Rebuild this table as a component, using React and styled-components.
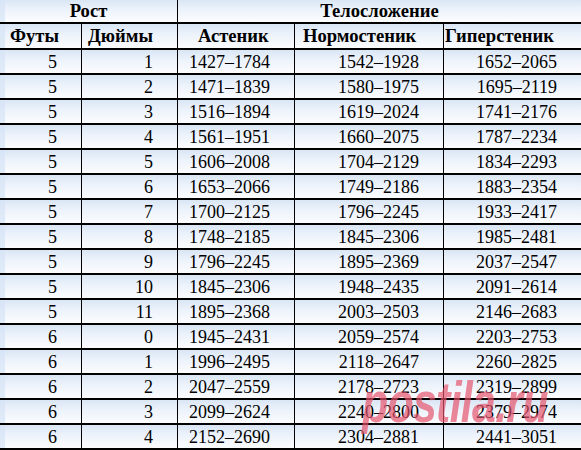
import React from "react";
import styled, { createGlobalStyle } from "styled-components";

const Global = createGlobalStyle`
  html, body { margin: 0; padding: 0; background: #ffffff; overflow: hidden; }
  #root { width: 581px; height: 450px; }
`;

const Wrap = styled.div`
  position: relative;
  width: 581px;
  height: 450px;
  overflow: hidden;
`;

const Grid = styled.div`
  display: grid;
  grid-template-columns: 82px 96px 117px 149px 137px;
  grid-auto-rows: 25px;
  grid-template-rows: 24px 26px;
  font-family: "Liberation Serif", "Times New Roman", serif;
  color: #000;
`;

const Cell = styled.div`
  grid-column: span ${(p) => p.$span || 1};
  display: flex;
  align-items: center;
  justify-content: ${(p) => (p.$align === "center" ? "center" : p.$align === "left" ? "flex-start" : "flex-end")};
  padding-left: ${(p) => p.$pl || 0}px;
  padding-right: ${(p) => (p.$align === "right" || !p.$align ? 24 : 0)}px;
  border-bottom: 2px solid #000;
  border-right: ${(p) => (p.$last ? "none" : "1px solid #000")};
  background: linear-gradient(to bottom, #dae6f5 0%, #edf3fb 45%, #fbfcfe 100%);
  box-shadow: ${(p) => (p.$first ? "inset 5px 0 0 rgba(214, 228, 246, 0.7)" : "none")};
  font-size: ${(p) => (p.$bold ? 18.6 : 18)}px;
  font-weight: ${(p) => (p.$bold ? 700 : 400)};
  white-space: nowrap;
  box-sizing: border-box;
  line-height: 1;
`;

const Watermark = styled.div`
  position: absolute;
  left: 362px;
  top: 368px;
  font-family: "Liberation Sans", Arial, sans-serif;
  font-weight: 700;
  font-style: italic;
  font-size: 58px;
  letter-spacing: -1px;
  color: rgba(228, 80, 104, 0.68);
  transform: scaleX(0.74);
  transform-origin: left top;
  pointer-events: none;
  white-space: nowrap;
`;

const rows = [
  [5, 1, "1427–1784", "1542–1928", "1652–2065"],
  [5, 2, "1471–1839", "1580–1975", "1695–2119"],
  [5, 3, "1516–1894", "1619–2024", "1741–2176"],
  [5, 4, "1561–1951", "1660–2075", "1787–2234"],
  [5, 5, "1606–2008", "1704–2129", "1834–2293"],
  [5, 6, "1653–2066", "1749–2186", "1883–2354"],
  [5, 7, "1700–2125", "1796–2245", "1933–2417"],
  [5, 8, "1748–2185", "1845–2306", "1985–2481"],
  [5, 9, "1796–2245", "1895–2369", "2037–2547"],
  [5, 10, "1845–2306", "1948–2435", "2091–2614"],
  [5, 11, "1895–2368", "2003–2503", "2146–2683"],
  [6, 0, "1945–2431", "2059–2574", "2203–2753"],
  [6, 1, "1996–2495", "2118–2647", "2260–2825"],
  [6, 2, "2047–2559", "2178–2723", "2319–2899"],
  [6, 3, "2099–2624", "2240–2800", "2379–2974"],
  [6, 4, "2152–2690", "2304–2881", "2441–3051"],
];

const subHeads = [
  { t: "Футы", pl: 10 },
  { t: "Дюймы", pl: 6 },
  { t: "Астеник", pl: 20 },
  { t: "Нормостеник", pl: 8 },
  { t: "Гиперстеник", pl: 1 },
];

export default function App() {
  return (
    <Wrap>
      <Global />
      <Grid>
        <Cell $span={2} $bold $align="center" $first>Рост</Cell>
        <Cell $span={3} $bold $align="center" $last>Телосложение</Cell>
        {subHeads.map((h, i) => (
          <Cell key={h.t} $bold $align="left" $pl={h.pl} $first={i === 0} $last={i === 4}>
            {h.t}
          </Cell>
        ))}
        {rows.map((r, ri) =>
          r.map((v, ci) => (
            <Cell key={ri + "-" + ci} $first={ci === 0} $last={ci === 4}>
              {v}
            </Cell>
          ))
        )}
      </Grid>
      <Watermark>postila.ru</Watermark>
    </Wrap>
  );
}
